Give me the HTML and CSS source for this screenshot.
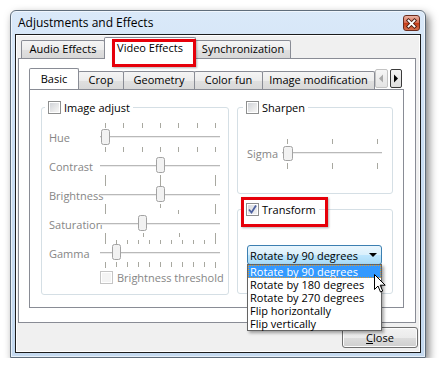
FILE: index.html
```html
<!DOCTYPE html>
<html lang="en">
<head>
    <meta charset="UTF-8">
    <meta name="viewport" content="width=device-width, initial-scale=1.0">
    <title>Adjustments and Effects</title>
    <link rel="stylesheet" href="styles.css">
</head>
<body>
    <div class="window">
        <div class="titlebar">
            <span class="title">Adjustments and Effects</span>
            <span class="close-btn">
                <svg width="15" height="13" viewBox="0 0 15 13"><path d="M4.5 3.5l6 6M10.5 3.5l-6 6" stroke="#4a1c10" stroke-width="3.6" stroke-linecap="square"/><path d="M4.5 3.5l6 6M10.5 3.5l-6 6" stroke="#fff" stroke-width="1.8" stroke-linecap="square"/></svg>
            </span>
        </div>

        <div class="client">
            <div class="tabs outer-tabs">
                <div class="tab w-audio">Audio Effects</div>
                <div class="tab selected marked w-video">Video Effects</div>
                <div class="tab w-sync">Synchronization</div>
            </div>

            <div class="pane outer-pane">
                <div class="tabs inner-tabs">
                    <div class="tab-strip">
                        <div class="tab selected w-basic">Basic</div>
                        <div class="tab w-crop">Crop</div>
                        <div class="tab w-geometry">Geometry</div>
                        <div class="tab w-color">Color fun</div>
                        <div class="tab w-image">Image modification</div>
                    </div>
                    <div class="scroll-btn">
                        <svg width="11" height="17" viewBox="0 0 11 17"><path d="M7 4.5v8l-4-4z" fill="#a9a9a9"/></svg>
                    </div>
                    <div class="scroll-btn hot">
                        <svg width="10" height="17" viewBox="0 0 10 17"><path d="M3 4.5v8l4-4z" fill="#000"/></svg>
                    </div>
                </div>

                <div class="pane inner-pane">
                    <fieldset class="group adjust">
                        <legend><span class="check"></span>Image adjust</legend>
                        <div class="group-body">
                            <div class="slider-row">
                                <span class="slider-label">Hue</span>
                                <svg class="slider" width="120" height="29">
                                    <path d="M5.5 2v5M23.5 2v5M42.5 2v5M60.5 2v5M78.5 2v5M97.5 2v5M115.5 2v5M5.5 26v5M23.5 26v5M42.5 26v5M60.5 26v5M78.5 26v5M97.5 26v5M115.5 26v5" stroke="#a8a8a0"/>
                                    <rect x="0" y="15" width="120" height="1" fill="#b9b9b9"/>
                                    <rect x="0" y="16" width="120" height="1" fill="#ececec"/>
                                    <rect x="1.5" y="8.5" width="8" height="15" rx="2" fill="#f2f2f2" stroke="#a3a3a3"/>
                                </svg>
                            </div>
                            <div class="slider-row">
                                <span class="slider-label">Contrast</span>
                                <svg class="slider" width="120" height="29">
                                    <path d="M5.5 25v11M60.5 25v11M115.5 25v11" stroke="#a8a8a0"/>
                                    <rect x="0" y="15" width="120" height="1" fill="#b9b9b9"/>
                                    <rect x="0" y="16" width="120" height="1" fill="#ececec"/>
                                    <rect x="56.5" y="7.5" width="8" height="15" rx="2" fill="#f2f2f2" stroke="#a3a3a3"/>
                                </svg>
                            </div>
                            <div class="slider-row">
                                <span class="slider-label">Brightness</span>
                                <svg class="slider" width="120" height="29">
                                    <path d="M5.5 25v10M115.5 25v10M60.5 25v4M78.5 31v4" stroke="#a8a8a0"/>
                                    <rect x="0" y="15" width="120" height="1" fill="#b9b9b9"/>
                                    <rect x="0" y="16" width="120" height="1" fill="#ececec"/>
                                    <rect x="56.5" y="7.5" width="8" height="15" rx="2" fill="#f2f2f2" stroke="#a3a3a3"/>
                                </svg>
                            </div>
                            <div class="slider-row">
                                <span class="slider-label">Saturation</span>
                                <svg class="slider" width="120" height="29">
                                    <path d="M5.5 25v11M115.5 25v11M16.5 32v4M27.5 32v4M38.5 32v4M49.5 32v4M60.5 32v4M71.5 32v4M82.5 32v4M93.5 32v4M104.5 32v4M43.5 25v4M79.5 25v4" stroke="#a8a8a0"/>
                                    <rect x="0" y="15" width="120" height="1" fill="#b9b9b9"/>
                                    <rect x="0" y="16" width="120" height="1" fill="#ececec"/>
                                    <rect x="38.5" y="7.5" width="8" height="15" rx="2" fill="#f2f2f2" stroke="#a3a3a3"/>
                                </svg>
                            </div>
                            <div class="slider-row">
                                <span class="slider-label">Gamma</span>
                                <svg class="slider" width="120" height="29">
                                    <path d="M5.5 25v6M16.5 25v5M27.5 25v5M38.5 25v5M49.5 25v5M60.5 25v5M71.5 25v5M82.5 25v5M93.5 25v5M104.5 25v5M115.5 25v6" stroke="#a8a8a0"/>
                                    <rect x="0" y="15" width="120" height="1" fill="#b9b9b9"/>
                                    <rect x="0" y="16" width="120" height="1" fill="#ececec"/>
                                    <rect x="12.5" y="7.5" width="8" height="15" rx="2" fill="#f2f2f2" stroke="#a3a3a3"/>
                                </svg>
                            </div>
                            <div class="check-row">
                                <span class="check disabled"></span>
                                <span class="muted">Brightness threshold</span>
                            </div>
                        </div>
                    </fieldset>

                    <div class="right-col">
                        <fieldset class="group sharpen">
                            <legend><span class="check"></span>Sharpen</legend>
                            <div class="group-body">
                                <div class="slider-row sigma">
                                    <span class="slider-label">Sigma</span>
                                    <svg class="slider" width="100" height="31">
                                        <path d="M5.5 2v5M50.5 2v5M95.5 2v5M5.5 26v6M50.5 26v6M95.5 26v6" stroke="#a8a8a0"/>
                                        <rect x="0" y="15" width="100" height="1" fill="#b9b9b9"/>
                                        <rect x="0" y="16" width="100" height="1" fill="#ececec"/>
                                        <rect x="1.5" y="9.5" width="9" height="14" rx="2" fill="#f2f2f2" stroke="#a3a3a3"/>
                                    </svg>
                                </div>
                            </div>
                        </fieldset>

                        <fieldset class="group transform">
                            <legend class="marked-legend">
                                <span class="check checked">
                                    <svg width="11" height="11" viewBox="0 0 11 11"><path d="M2 5.5l2.5 3L9 1.5" fill="none" stroke="#4d61a0" stroke-width="1.8"/></svg>
                                </span>Transform
                            </legend>
                            <div class="group-body">
                                <div class="combo">
                                    <span>Rotate by 90 degrees</span>
                                    <span class="combo-arrow"></span>
                                    <ul class="combo-list">
                                        <li class="current">Rotate by 90 degrees</li>
                                        <li>Rotate by 180 degrees</li>
                                        <li>Rotate by 270 degrees</li>
                                        <li>Flip horizontally</li>
                                        <li>Flip vertically</li>
                                    </ul>
                                    <svg class="cursor" width="14" height="21" viewBox="0 0 14 21"><path d="M1.5 1.5v15l3.5-3.5 2.5 6 2.2-1-2.5-5.8h5z" fill="#fff" stroke="#000" stroke-linejoin="round"/></svg>
                                </div>
                            </div>
                        </fieldset>
                    </div>
                </div>
            </div>

            <div class="button-row">
                <button class="close-button"><u>C</u>lose</button>
            </div>
        </div>
    </div>
</body>
</html>
```

FILE: styles.css
```css
* {
    box-sizing: border-box;
}

body {
    margin: 0;
    background-color: #fff;
    color: #000;
    font-family: "Open Sans", "Noto Sans", sans-serif;
    font-size: 11px;
}

.window {
    margin: 10px 0 0 10px;
    width: 416px;
    height: 348px;
    display: flex;
    flex-direction: column;
    border: 1px solid #5f6d7b;
    border-radius: 6px 6px 0 0;
    background: linear-gradient(to bottom, #dae9f9 0%, #cadef3 40%, #c4d9ef 100%);
    box-shadow: 3px 4px 9px rgba(0, 0, 0, 0.5), inset 0 0 0 1px rgba(255, 255, 255, 0.6);
}

.titlebar {
    height: 23px;
    display: flex;
    align-items: center;
    padding: 0 5px 0 7px;
}

.title {
    flex: 1;
    font-size: 12px;
}

.close-btn {
    width: 17px;
    height: 16px;
    margin-top: 1px;
    display: flex;
    align-items: center;
    justify-content: center;
    border: 1px solid #6a2c1e;
    border-radius: 3px;
    background: linear-gradient(to bottom, #eab3a4 0%, #d66a50 48%, #c43a16 52%, #d6714f 100%);
}

.client {
    flex: 1;
    margin: 0 4px 4px 4px;
    padding: 2px 4px 4px 2px;
    display: flex;
    flex-direction: column;
    border: 1px solid #1b1b1b;
    box-shadow: inset 0 0 0 1px #fff;
    background-color: #f0f0f0;
}

/* tabs */
.tabs {
    display: flex;
    align-items: flex-end;
    height: 21px;
    flex: none;
    position: relative;
    z-index: 1;
}

.outer-tabs {
    padding-left: 3px;
}

.tab-strip {
    display: flex;
    align-items: flex-end;
    height: 21px;
    width: 346px;
    overflow: hidden;
    flex: none;
}

.tab {
    flex: none;
    height: 18px;
    line-height: 16px;
    text-align: center;
    white-space: nowrap;
    border: 1px solid #898c95;
    border-bottom: none;
    border-radius: 2px 2px 0 0;
    background: linear-gradient(to bottom, #f5f5f5 0%, #ececec 50%, #e0e0e0 51%, #d8d8d8 100%);
}

.tab + .tab {
    margin-left: -1px;
}

.tab.selected {
    position: relative;
    z-index: 2;
    height: 22px;
    margin-bottom: -1px;
    line-height: 19px;
    background: #fff;
}

.w-audio { width: 84px; }
.w-video { width: 92px; }
.w-sync { width: 96px; }
.w-basic { width: 50px; }
.w-crop { width: 46px; }
.w-geometry { width: 72px; }
.w-color { width: 69px; }
.w-image { width: 113px; }

.marked::after {
    content: "";
    position: absolute;
    left: 7px;
    top: 1px;
    width: 78px;
    height: 22px;
    border: 3px solid #e6000a;
    box-shadow: 1px 1px 2px rgba(0, 0, 0, 0.3);
}

.scroll-btn {
    flex: none;
    align-self: center;
    width: 13px;
    height: 19px;
    display: flex;
    align-items: center;
    justify-content: center;
    border: 1px solid #c3c3c3;
    border-radius: 2px;
    background: linear-gradient(to bottom, #f6f6f6, #e4e4e4);
}

.scroll-btn.hot {
    width: 12px;
    margin-left: 2px;
    border-color: #3a3a3a;
    background: linear-gradient(to bottom, #f2f2f2, #dedede);
}

.pane {
    border: 1px solid #898c95;
    background-color: #fff;
}

.outer-pane {
    flex: 1;
    display: flex;
    flex-direction: column;
    padding: 9px 11px 14px 10px;
}

.inner-pane {
    flex: 1;
    display: flex;
    align-items: flex-start;
    gap: 8px;
    padding: 10px 10px 0 11px;
}

/* group boxes */
.group {
    margin: 0;
    padding: 0;
    min-width: 0;
    border: 1px solid #d5dfe5;
    border-radius: 3px;
}

.group legend {
    height: 14px;
    display: flex;
    align-items: center;
    gap: 3px;
    margin-left: 3px;
    padding: 0 3px;
}

.adjust {
    width: 188px;
}

.adjust .group-body {
    padding: 7px 0 10px 7px;
}

.right-col {
    width: 156px;
    display: flex;
    flex-direction: column;
    gap: 8px;
}

.right-col legend {
    margin-left: 5px;
}

.sharpen .group-body {
    padding: 23px 0 25px 9px;
}

.transform .group-body {
    padding: 29px 0 28px 9px;
}

.check {
    flex: none;
    width: 13px;
    height: 13px;
    display: flex;
    align-items: center;
    justify-content: center;
    border: 1px solid #8e8f8f;
    box-shadow: inset 0 0 0 1px #fff;
    background: linear-gradient(135deg, #cdd0d5 0%, #eeeeee 70%, #f8f8f8 100%);
}

.check.disabled {
    border-color: #c5c5c5;
    background: #f4f4f4;
}

.check.checked {
    background: linear-gradient(135deg, #d6d9de 0%, #f4f4f4 100%);
}

.marked-legend {
    position: relative;
}

.marked-legend::after {
    content: "";
    position: absolute;
    left: -2px;
    top: -5px;
    width: 81px;
    height: 24px;
    border: 3px solid #e6000a;
    box-shadow: 1px 1px 2px rgba(0, 0, 0, 0.3);
}

/* sliders */
.slider-row {
    display: flex;
    height: 29px;
}

.slider-row.sigma {
    height: 31px;
}

.slider-label {
    width: 51px;
    flex: none;
    margin-top: 10px;
    line-height: 14px;
    height: 14px;
    color: #868686;
}

.sigma .slider-label {
    width: 35px;
}

.slider {
    flex: none;
    overflow: visible;
}

.check-row {
    display: flex;
    align-items: center;
    gap: 4px;
    height: 14px;
    margin-top: 4px;
    padding-left: 51px;
}

.muted {
    color: #868686;
}

/* combo box */
.combo {
    position: relative;
    width: 135px;
    height: 20px;
    display: flex;
    align-items: center;
    padding-left: 2px;
    border: 1px solid #3c7fb1;
    border-radius: 3px;
    background: linear-gradient(to bottom, #eaf6fd 0%, #d9f0fc 50%, #bee6fd 51%, #a7d9f5 100%);
}

.combo-arrow {
    margin-left: auto;
    margin-right: 4px;
    border-left: 4px solid transparent;
    border-right: 4px solid transparent;
    border-top: 4px solid #000;
}

.combo-list {
    position: absolute;
    left: -1px;
    top: 18px;
    width: 135px;
    margin: 0;
    padding: 0;
    list-style: none;
    border: 1px solid #646464;
    background-color: #fff;
    box-shadow: 2px 2px 3px rgba(0, 0, 0, 0.35);
    z-index: 10;
}

.combo-list li {
    height: 13px;
    line-height: 13px;
    padding-left: 2px;
    white-space: nowrap;
}

.combo-list li.current {
    background-color: #3399ff;
    color: #fff;
    outline: 1px dotted #e49b2d;
    outline-offset: -1px;
}

.cursor {
    position: absolute;
    left: 125px;
    top: 27px;
    z-index: 11;
}

/* buttons */
.button-row {
    display: flex;
    justify-content: flex-end;
    margin-top: 4px;
}

.close-button {
    width: 76px;
    height: 21px;
    margin-right: -2px;
    padding: 0;
    font: inherit;
    color: #000;
    border: 1px solid #707070;
    border-radius: 3px;
    box-shadow: inset 0 0 0 1px #fcfcfc;
    background: linear-gradient(to bottom, #f2f2f2 0%, #ebebeb 50%, #dddddd 51%, #cfcfcf 100%);
}
```
